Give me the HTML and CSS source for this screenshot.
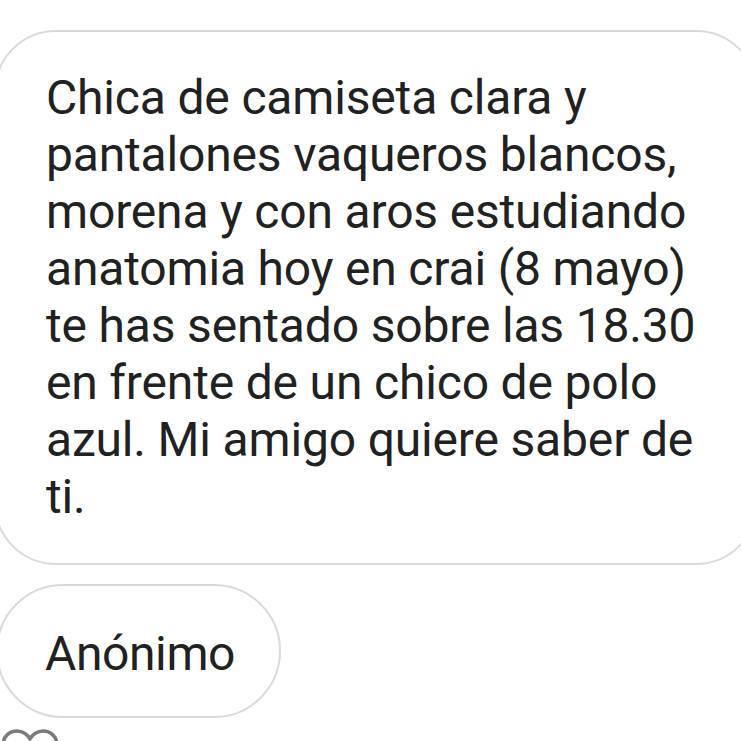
FILE: index.html
```html
<!DOCTYPE html>
<html lang="es">
<head>
<meta charset="utf-8">
<title>Mensaje</title>
<link rel="stylesheet" href="styles.css">
</head>
<body>
<div class="thread">
  <div class="bubble message">
    <p class="text">Chica de camiseta clara y<br>pantalones vaqueros blancos,<br>morena y con aros estudiando<br>anatomia hoy en crai (8 mayo)<br>te has sentado sobre las 18.30<br>en frente de un chico de polo<br>azul. Mi amigo quiere saber de<br>ti.</p>
  </div>
  <div class="bubble author">
    <span class="text">Anónimo</span>
  </div>
  <div class="actions">
    <svg class="heart" width="60" height="52" viewBox="0 0 60 52" aria-hidden="true">
      <path d="M30 48 C 20 40, 3 28, 3 16 C 3 7, 10 2, 17 2 C 23 2, 28 6, 30 10 C 32 6, 37 2, 43 2 C 50 2, 57 7, 57 16 C 57 28, 40 40, 30 48 Z" fill="none" stroke="#7a7a7a" stroke-width="3.5" stroke-linejoin="round"/>
    </svg>
  </div>
</div>
</body>
</html>
```
FILE: styles.css
```css
html, body {
  margin: 0;
  padding: 0;
  background: #ffffff;
  overflow: hidden;
}

.thread {
  width: 741px;
  height: 741px;
  overflow: hidden;
  padding-top: 30px;
  box-sizing: border-box;
  font-family: Roboto, "Liberation Sans", sans-serif;
  color: #212121;
}

.bubble {
  border: 2px solid #dadada;
  background: #ffffff;
  box-sizing: border-box;
}

.message {
  margin-left: -6px;
  width: 764px;
  height: 535px;
  border-radius: 62px;
  padding: 37px 0 0 50px;
}

.message .text {
  margin: 0;
  font-size: 48px;
  line-height: 57px;
  letter-spacing: -0.17px;
  white-space: nowrap;
}

.author {
  margin-top: 19px;
  margin-left: -4px;
  width: 285px;
  height: 134px;
  border-radius: 67px;
  display: flex;
  align-items: center;
  padding-left: 47px;
  padding-top: 4px;
}

.author .text {
  font-size: 48px;
  line-height: 57px;
  letter-spacing: -0.4px;
}

.actions {
  margin-top: 11px;
  padding-left: 0;
  display: flex;
}

.heart {
  display: block;
}
```
